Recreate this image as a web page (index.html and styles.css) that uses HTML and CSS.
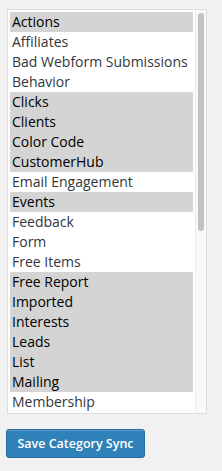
FILE: index.html
```html
<!DOCTYPE html>
<html lang="en">
<head>
  <meta charset="UTF-8">
  <title>Category Sync</title>
  <link rel="stylesheet" href="styles.css">
</head>
<body>
  <div class="picker">
    <ul class="options">
      <li class="selected">Actions</li>
      <li>Affiliates</li>
      <li>Bad Webform Submissions</li>
      <li>Behavior</li>
      <li class="selected">Clicks</li>
      <li class="selected">Clients</li>
      <li class="selected">Color Code</li>
      <li class="selected">CustomerHub</li>
      <li>Email Engagement</li>
      <li class="selected">Events</li>
      <li>Feedback</li>
      <li>Form</li>
      <li>Free Items</li>
      <li class="selected">Free Report</li>
      <li class="selected">Imported</li>
      <li class="selected">Interests</li>
      <li class="selected">Leads</li>
      <li class="selected">List</li>
      <li class="selected">Mailing</li>
      <li>Membership</li>
    </ul>
    <div class="scrollbar">
      <div class="thumb"></div>
    </div>
  </div>

  <button class="save">Save Category Sync</button>
</body>
</html>
```
FILE: styles.css
```css
body {
  margin: 0;
  padding: 9px 0 0 6px;
  background-color: #f1f1f1;
  font-family: "Open Sans", sans-serif;
}

.picker {
  display: flex;
  width: 198px;
  height: 403px;
  margin-left: 1px;
  background-color: #fff;
  border: 1px solid #dddddd;
}

.options {
  list-style-type: none;
  margin: 0;
  padding: 2px;
  width: 183px;
}

.options li {
  height: 20px;
  line-height: 20px;
  padding-left: 2px;
  font-size: 14px;
  color: #32373c;
  white-space: nowrap;
}

.options li.selected {
  background-color: #d4d4d4;
  color: #000;
}

.scrollbar {
  width: 10px;
  background-color: #f9f9f9;
  border-left: 1px solid #ebebeb;
}

.thumb {
  width: 6px;
  height: 218px;
  margin: 3px 0 0 2px;
  border-radius: 3px;
  background-color: #c2c2c2;
}

.save {
  display: block;
  margin-top: 15px;
  width: 139px;
  height: 29px;
  padding: 0;
  font-family: "Open Sans", sans-serif;
  font-size: 12.5px;
  font-weight: 600;
  color: #fff;
  background-color: #2f81b9;
  border: 1px solid #276c9b;
  border-radius: 3px;
  box-shadow: inset 0 1px 0 #5a9bcb;
  cursor: pointer;
}
```
